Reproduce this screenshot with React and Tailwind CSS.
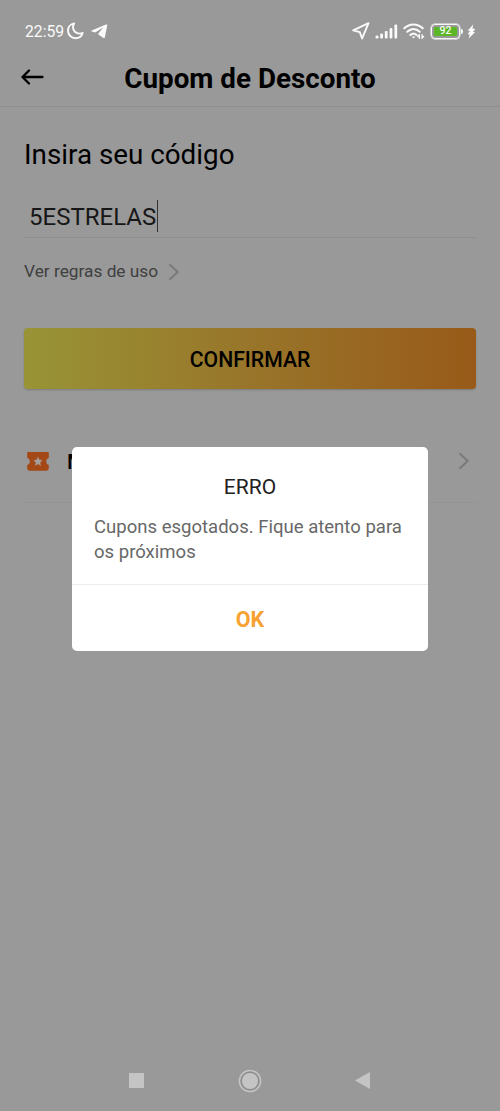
import { useState } from 'react';

const MoonIcon = () => (
  <svg width="17" height="18" viewBox="0 0 17 18" fill="none" stroke="#fafafa" strokeWidth="1.9" strokeLinejoin="round">
    <path d="M7.2 1.4C3.600 2 1 5 1 8.700c0 4.200 3.400 7.500 7.500 7.500 3.400 0 6.200-2.100 7.200-5.200-1 .4-1.900.6-2.900.6-4 0-6.800-2.800-6.800-6.400 0-1.400.4-2.700 1.200-3.800z" />
  </svg>
);

const TelegramIcon = () => (
  <svg width="17" height="15" viewBox="0 0 17 15" fill="#fafafa">
    <path d="M.7 6.500 15 .5c.8-.3 1.400.1 1.200 1l-2.300 11.700c-.2.9-.8 1.100-1.500.7L7.800 10.800l-.8-.7 5.400-6.900L4.300 8.500.8 7.500c-.7-.2-.8-.7-.1-1z" />
  </svg>
);

const LocationIcon = () => (
  <svg width="18" height="18" viewBox="0 0 18 18" fill="none" stroke="#fafafa" strokeWidth="1.900" strokeLinejoin="round">
    <path d="M16.500 1.200 1.200 8.400l6.600 1.800 2.300 6.300z" />
  </svg>
);

const SignalIcon = () => (
  <svg width="23" height="15" viewBox="0 0 23 15" fill="#fafafa">
    <rect x="0.500" y="11.500" width="3" height="3" rx="1.200" />
    <rect x="5.200" y="9.500" width="2.800" height="5" rx="1" />
    <rect x="9.800" y="7" width="2.800" height="7.500" rx="1" />
    <rect x="14.600" y="4" width="2.800" height="10.500" rx="1" />
    <rect x="19.400" y="0.500" width="2.800" height="14" rx="1" />
  </svg>
);

const WifiIcon = () => (
  <svg width="22" height="17" viewBox="0 0 22 17" fill="none" stroke="#fafafa" strokeWidth="2.100" strokeLinecap="round">
    <path d="M1.300 5.300c5.400-5.100 13-5.100 18.400 0" />
    <path d="M4.300 8.700c3.700-3.400 8.700-3.400 12.400 0" />
    <path d="M7.300 12c2-1.700 4.400-1.700 6.400 0" />
    <path d="M8.600 13.600h3.800l-1.900 2z" fill="#fafafa" stroke="none" />
    <path d="M16.400 15.500v-4l-1.700 2.200h1.700M19 11.500v4l1.700-2.200H19" strokeWidth="1.200" strokeLinejoin="round" />
  </svg>
);

const BoltIcon = () => (
  <svg width="9" height="15" viewBox="0 0 9 15" fill="#fafafa">
    <path d="M6.200.4.8 6.600l2.300.4-2.500 3 2 .4L1.700 14.500 8 8.300l-2-.5L8.400 5l-2.900-.4z" />
  </svg>
);

const Chevron = ({ className }) => (
  <svg width="12" height="18" viewBox="0 0 12 18" fill="none" stroke="currentColor" strokeWidth="2" className={className}>
    <path d="M1.500 1.200 9.700 9l-8.200 7.800" />
  </svg>
);

const TicketIcon = () => (
  <svg width="22" height="19" viewBox="0 0 22 19">
    <path
      d="M1.500 0h19c.8 0 1.300.5 1.300 1.300v4.600c-1.700.3-2.600 1.700-2.600 3.500s.9 3.200 2.600 3.500V16c0 1.700-1 2.800-2.700 2.800H3C1.300 18.800.2 17.700.2 16v-3.100c1.700-.3 2.600-1.700 2.600-3.500S1.900 6.200.2 5.900V1.300C.2.500.7 0 1.500 0z"
      fill="#a34816"
    />
    <path d="m11 5.400 1.200 2.700 2.900.3-2.200 2 .6 2.900L11 11.800l-2.500 1.500.6-2.900-2.200-2 2.900-.3z" fill="#a5a09c" stroke="#a5a09c" strokeWidth="0.600" />
  </svg>
);

const StatusBar = () => (
  <div className="flex h-[50px] items-center pl-[25px] pr-6 pt-3 text-[#fafafa]">
    <span className="w-[42px] pt-[2px] text-[15.700px] leading-none">22:59</span>
    <MoonIcon />
    <span className="ml-[7px]"><TelegramIcon /></span>
    <div className="ml-auto flex items-center">
      <LocationIcon />
      <span className="ml-[5px]"><SignalIcon /></span>
      <span className="ml-[5px]"><WifiIcon /></span>
      <div className="ml-[6px] flex h-[15px] w-[29px] items-center rounded-[4px] border border-[#fafafa] p-[2px] ring-[0.500px] ring-[#fafafa]">
        <span className="flex h-full w-full items-center justify-center rounded-[1px] bg-[#5bb726] pt-px text-[10.500px] font-medium leading-none">92</span>
      </div>
      <span className="ml-px h-[5px] w-[2px] rounded-r bg-[#fafafa]"></span>
      <span className="ml-[4px]"><BoltIcon /></span>
    </div>
  </div>
);

const NavigationBar = () => (
  <div className="mt-auto flex h-[61px] items-center justify-between pl-[129px] pr-[130px]">
    <svg width="15" height="15" viewBox="0 0 15 15"><rect width="15" height="15" fill="#c4c4c4" /></svg>
    <svg width="24" height="24" viewBox="0 0 24 24" fill="none" className="-mr-[1px]">
      <circle cx="12" cy="12" r="10.600" stroke="#c4c4c4" strokeWidth="1.500" />
      <circle cx="12" cy="12" r="8.800" stroke="#8a8a8a" />
      <circle cx="12" cy="12" r="8" fill="#c4c4c4" />
    </svg>
    <svg width="15" height="17" viewBox="0 0 15 17"><path d="M15 0v17L0 8.500z" fill="#c4c4c4" /></svg>
  </div>
);

const ErrorDialog = ({ onClose }) => (
  <div className="absolute left-[72px] top-[447px] h-[204px] w-[356px] overflow-hidden rounded-[5px] bg-white">
    <div className="h-[138px] border-b border-[#ececec] px-[22px] pt-[28px]">
      <h2 className="text-center text-[21px] leading-[25px] text-[#212121]">ERRO</h2>
      <p className="mt-[15px] whitespace-nowrap text-[18.550px] leading-[25px] text-[#686868]">
        Cupons esgotados. Fique atento para<br />os próximos
      </p>
    </div>
    <button onClick={onClose} className="flex h-[66px] w-full items-center justify-center pt-[4px] text-[21.500px] font-bold text-[#f7a233]">
      OK
    </button>
  </div>
);

const App = () => {
  const [code, setCode] = useState('5ESTRELAS');
  const [showError, setShowError] = useState(true);

  return (
    <div className="relative flex h-[1111px] w-[500px] flex-col overflow-hidden bg-[#999] font-[Roboto,sans-serif] text-black">
      <StatusBar />

      <header className="flex h-[57px] items-center border-b border-[#8f8f8f] px-[21px]">
        <svg width="24" height="16" viewBox="0 0 24 16" fill="none" stroke="black" strokeWidth="2.300" strokeLinecap="round" strokeLinejoin="round" className="-mt-[2px]">
          <path d="M21.500 8H1.500M8 1.500 1.500 8 8 14.500" />
        </svg>
        <h1 className="flex-1 pr-6 pt-[2px] text-center text-[27.800px] font-bold">Cupom de Desconto</h1>
      </header>

      <main className="px-6 pt-[30px]">
        <label htmlFor="code" className="block text-[27.800px] leading-9">Insira seu código</label>
        <div className="mt-[22px] flex h-[43px] items-center border-b border-[#8f8f8f] pl-[5px] text-[24px] text-[#171717]">
          <input
            id="code"
            value={code}
            onChange={(e) => setCode(e.target.value)}
            className="w-[128px] bg-transparent pt-px outline-none"
          />
          <span className="h-8 w-px shrink-0 bg-[#333]"></span>
        </div>

        <a className="mt-[22px] flex h-6 items-center text-[17.300px] text-[#404040]">
          Ver regras de uso
          <Chevron className="ml-[10px] text-[#7a7a7a]" />
        </a>

        <button
          onClick={() => setShowError(true)}
          className="mt-[44px] flex h-[61px] w-full items-center justify-center rounded-[4px] bg-linear-to-r from-[#989436] via-[#98752a] to-[#985a18] pt-[3px] text-[21.200px] font-medium shadow-[0_1px_2px_rgba(0,0,0,0.2)]"
        >
          CONFIRMAR
        </button>

        <div className="mt-[41px] flex h-[73px] items-center border-b border-[#949494] pb-[10px] pl-[3px] pr-[6px]">
          <TicketIcon />
          <span className="ml-[18px] pt-[3px] text-[21px] font-medium">M</span>
          <Chevron className="ml-auto text-[#7a7a7a]" />
        </div>
      </main>

      <NavigationBar />

      {showError && <ErrorDialog onClose={() => setShowError(false)} />}
    </div>
  );
};

export default App;
